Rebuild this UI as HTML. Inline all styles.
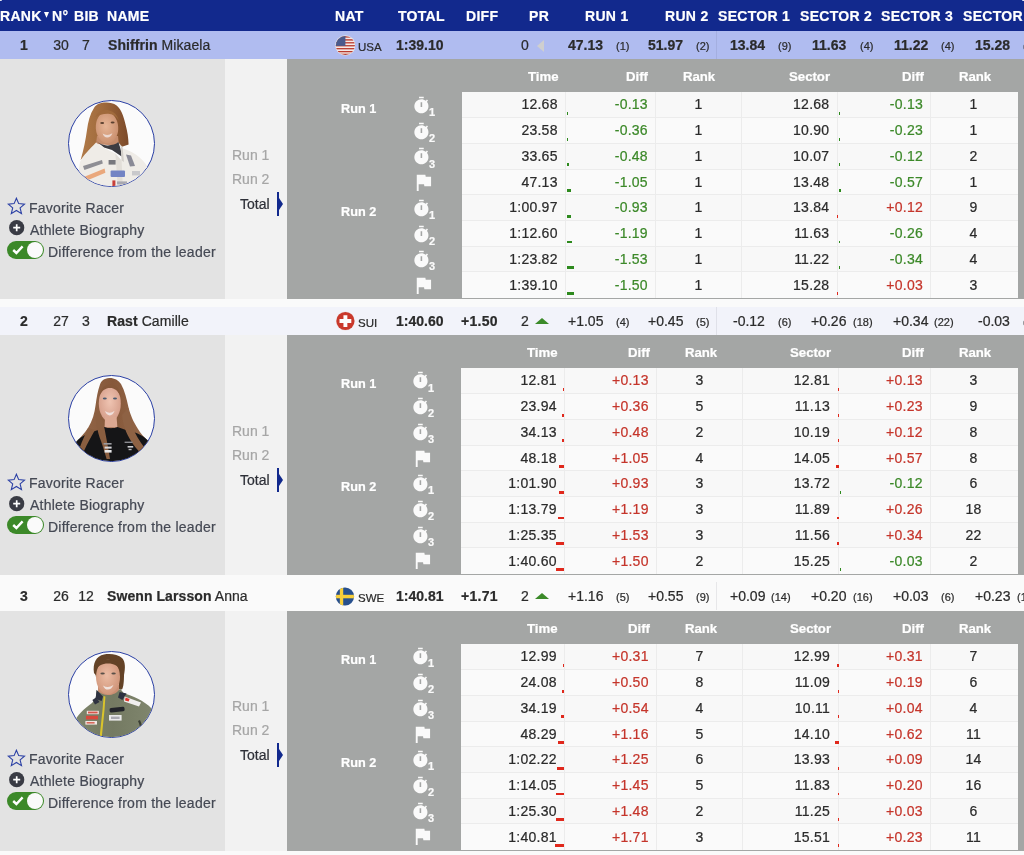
<!DOCTYPE html>
<html lang="en"><head><meta charset="utf-8"><title>Results</title>
<style>
html,body{margin:0;padding:0}
body{-webkit-text-stroke:.22px;background:#fafafa;font-family:"Liberation Sans",Arial,Helvetica,sans-serif;font-size:14px;color:#2b2b2b;overflow:hidden}
#page{position:relative;width:1024px;height:855px;overflow:hidden;background:#fafafa}
.t{position:absolute;white-space:nowrap;line-height:16px;font-size:14px;will-change:transform}
.b,b{font-weight:bold}
.c{text-align:center}
.r{text-align:right}
.hdr{position:absolute;left:0;top:0;width:1024px;height:30.5px;background:#12298d;color:#fff}
.hdr .h{top:7.5px;font-weight:bold;color:#fff;letter-spacing:.3px}
.sortarrow{position:absolute;left:44.3px;top:11.6px;width:5px;height:6px}
.sortarrow svg{display:block}
.racer{position:absolute;left:0;width:1024px;height:28px}
.rbg{position:absolute;left:0;width:1024px;height:28.1px;background:#f2f3fa}
.racer.hl .rbg{background:#b0bcf0}
.racer.odd .rbg{background:#fafafa}
.racer .t{top:6px}
.racer .nm{letter-spacing:.08px}
.racer .df{letter-spacing:.3px}
.racer .sm{font-size:11px;top:7px}
.racer .nat{font-size:11.5px;top:8px}
.flag{position:absolute;left:334.6px;top:3.8px;width:20.8px;height:20.8px}
.flag svg{width:20.8px;height:20.8px}
.flag svg{display:block}
.tri{position:absolute;width:0;height:0}
.tri.left{left:537px;top:9px;border-top:6.25px solid transparent;border-bottom:6.25px solid transparent;border-right:7px solid #cfcfcf}
.tri.up{left:534.5px;top:10.5px;border-left:7px solid transparent;border-right:7px solid transparent;border-bottom:6.5px solid #3b8a29}
.vsep{position:absolute;left:716px;top:0;width:1px;height:28px;background:rgba(40,40,70,.09)}
.detail{position:absolute;left:0;width:1024px;height:240px}
.dc{position:absolute;left:0;width:1024px;height:240px}
.rc{position:absolute;left:0;width:1024px;height:28px}
.lp{position:absolute;left:0;top:0;width:225px;height:240px}
.bgl{position:absolute;left:0;top:-.4px;width:225px;height:240.6px;background:#e3e3e3}
.mp{position:absolute;left:225px;top:0;width:62px;height:240px}
.bgm{position:absolute;left:225px;top:-.4px;width:62px;height:240.6px;background:#f2f2f2}
.rp{position:absolute;left:287px;top:0;width:737px;height:240px}
.bgr{position:absolute;left:287px;top:-.4px;width:737px;height:240.6px;background:#a4a6a5}
.photo{position:absolute;left:68px;top:41px;width:87px;height:87px}
.photo svg{display:block}
.lt{color:#454954;letter-spacing:.24px}
.ic{position:absolute;display:block}
.ic svg{display:block}
.star{left:7px;top:138.4px}
.plus{left:8.8px;top:161.3px}
.toggle{position:absolute;left:7.2px;top:181.7px;width:36.8px;height:18.4px;border-radius:9.2px;background:#3c8929}
.toggle svg{position:absolute;left:4.6px;top:4px}
.toggle i{position:absolute;right:1.2px;top:1.2px;width:16px;height:16px;border-radius:8px;background:#fafafa}
.mt{right:17.4px;color:#2e3038}
.mt.g{color:#a6a6a6}
.sel{position:absolute;left:52.4px;top:132.8px;width:2.1px;height:24.2px;background:#12298d}
.sel:after{content:'';position:absolute;left:2px;top:6.1px;border-top:6px solid transparent;border-bottom:6px solid transparent;border-left:4.4px solid #12298d}
.th{color:#fff;font-weight:bold;font-size:13.2px;top:10px}
.sw{left:124.55px}
.fl{left:125px}
.sub{left:141.8px;color:#fafafa;font-weight:bold;font-size:11px;line-height:10px}
.rl{font-size:12.7px}
table.tb{will-change:transform;position:absolute;left:175px;top:33.2px;border-collapse:collapse;table-layout:fixed;width:555.5px}
.tb td{height:25.7px;padding:0 8px .7px 0;border:1px solid #ececec;background:#f8f8f8;font-size:14px;text-align:right;position:relative;line-height:16px;letter-spacing:.25px;box-sizing:border-box}
.tb tr:nth-child(even) td{background:#fafafa}
.tb tr td:first-child{border-left:none}
.tb tr:first-child td{border-top:none}
.tb tr:last-child td{border-bottom:none}
.tb tr td:last-child{border-right:none}
.tb td.c3,.tb td.c6{text-align:center;padding:0 0 .7px 0}
.tb td.c2,.tb td.c5{padding-right:7.2px}
.tb td.c6{padding-right:1.6px}
.tb .gr{color:#3c8929}
.tb .rd{color:#c5352b}
.bar{position:absolute;bottom:2.2px;height:2.9px;display:block}
.gr .bar{background:#2e8a1e}
.rd .bar{background:#e0281c}

.cr{position:absolute;right:0;top:0;width:2px;height:1px;background:#dfe3f3;border-radius:0 0 0 2px}
.cl{position:absolute;left:0;top:0;width:2px;height:1px;background:#dfe3f3;border-radius:0 0 2px 0}

</style></head><body>
<div id="page">
<div class="hdr"><span class="t h" style="left:0px">RANK</span><span class="t h" style="left:52px">N°</span><span class="t h" style="left:74px">BIB</span><span class="t h" style="left:107px">NAME</span><span class="t h" style="left:335px">NAT</span><span class="t h" style="left:398px">TOTAL</span><span class="t h" style="left:466px">DIFF</span><span class="t h" style="left:529px">PR</span><span class="t h" style="left:585px">RUN 1</span><span class="t h" style="left:665px">RUN 2</span><span class="t h" style="left:718px">SECTOR 1</span><span class="t h" style="left:800px">SECTOR 2</span><span class="t h" style="left:881px">SECTOR 3</span><span class="t h" style="left:963px">SECTOR 4</span><span class="sortarrow"><svg width="5" height="6" viewBox="0 0 5 6"><path d="M0 0 H5 L2.7 5.6 H2.3 Z" fill="#fff"/></svg></span></div>
<div class="racer hl" style="top:31px"><div class="rbg" style="top:-0.5px"></div><div class="rc"><span class="t b c" style="left:4px;width:40px">1</span><span class="t c" style="left:46px;width:30px">30</span><span class="t c" style="left:72px;width:28px">7</span><span class="t nm" style="left:107.5px"><b>Shiffrin</b> Mikaela</span><span class="flag"><svg width="20.8" height="20.8" viewBox="0 0 20.8 20.8"><defs><clipPath id="fc1"><circle cx="10.35" cy="10.45" r="9.5"/></clipPath></defs><circle cx="10.35" cy="10.45" r="10.1" fill="#e6e4e6"/><g clip-path="url(#fc1)"><rect width="20.8" height="20.8" fill="#f4e9e6"/><g fill="#b83a2e"><rect y="1.2" width="20.8" height="1.4"/><rect y="4.2" width="20.8" height="1.4"/><rect y="7.15" width="20.8" height="1.3"/><rect y="10.1" width="20.8" height="1.3"/><rect y="13.05" width="20.8" height="1.3"/><rect y="16" width="20.8" height="1.3"/><rect y="18.7" width="20.8" height="1.4"/></g><rect width="10.4" height="10.9" fill="#4a5a8c"/></g></svg></span><span class="t nat" style="left:358px">USA</span><span class="t b" style="left:396px">1:39.10</span><span class="t r" style="right:495px">0</span><span class="tri left"></span><span class="t r b" style="right:421px">47.13</span><span class="t r sm" style="right:395px">(1)</span><span class="t r b" style="right:341px">51.97</span><span class="t r sm" style="right:315px">(2)</span><span class="t r b" style="right:259px">13.84</span><span class="t r sm" style="right:233px">(9)</span><span class="t r b" style="right:178px">11.63</span><span class="t r sm" style="right:151px">(4)</span><span class="t r b" style="right:96px">11.22</span><span class="t r sm" style="right:70px">(4)</span><span class="t r b" style="right:14px">15.28</span><span class="t r sm" style="right:-12px">(3)</span></div><span class="vsep"></span></div>
<div class="detail" style="top:59px"><div class="bgl" style="top:-0.4px;height:240.7px"></div><div class="bgm" style="top:-0.4px;height:240.7px"></div><div class="bgr" style="top:-0.4px;height:240.7px"></div><div class="dc"><div class="lp"><div class="photo" style="top:41.0px"><svg width="87" height="87" viewBox="0 0 87 87"><defs><clipPath id="pc1"><circle cx="43.5" cy="43.5" r="42.7"/></clipPath><linearGradient id="h1" x1="0" y1="0" x2="1" y2="0"><stop offset="0" stop-color="#b07a48"/><stop offset=".45" stop-color="#a06a3c"/><stop offset="1" stop-color="#7c4a2a"/></linearGradient><radialGradient id="f1" cx=".45" cy=".45" r=".6"><stop offset="0" stop-color="#e6b596"/><stop offset="1" stop-color="#c98f6e"/></radialGradient></defs><circle cx="43.5" cy="43.5" r="43" fill="#fbfbfb" stroke="#2b40a5" stroke-width="1"/><g clip-path="url(#pc1)"><path d="M38.6 2.6 C33 2.4 28.5 4 26 8 C22 14 20 22 19 30 C17.6 40 15.6 50 12.6 60 L24 48 L30 42 L50 42 L54 46.8 L60.6 44.4 C60.4 38 59.6 32 57.4 24 C55.6 16 53 9 48.6 5.6 C45.6 3.4 42 2.6 38.6 2.6 Z" fill="url(#h1)"/><path d="M29 36 L50 36 L51 46 L28 44 Z" fill="#c48c6c"/><ellipse cx="39" cy="27.6" rx="11.2" ry="15.6" fill="url(#f1)" transform="rotate(-4 39 27.6)"/><path d="M27.4 17 C30 11 36 9.4 41 10.4 C46 11.4 49.4 15 50.6 20 C48 15.6 44 13.6 39.6 13.8 C34.6 14 30.4 15 27.4 17 Z" fill="#a06a3c"/><path d="M34.6 33.6 Q39.4 36.6 44.4 33.2 Q42.6 37.6 39.2 37.6 Q36 37.6 34.6 33.6 Z" fill="#ecd8d0"/><ellipse cx="34.2" cy="23" rx="2" ry="1" fill="#5a4030"/><ellipse cx="44.6" cy="22.4" rx="2" ry="1" fill="#5a4030"/><path d="M27.6 40.6 C32 44.6 36 45.6 40 45.4 C44 45.2 48 44.4 50.4 42 L52 47 L54.4 57 L44 50 L36 47.6 Z" fill="#3c3c42"/><path d="M12 62 C15 55 22 49 28 42.4 C33 46.6 40 50 47.4 53.6 L53.6 60.6 L53 47.6 L59 50 C67 53 75 59 79 66 L80 90 L8 90 Z" fill="#efece7"/><path d="M53.6 60.6 L53 47.6 L50.8 43.4 L54.6 47 L56 62 Z" fill="#d4d0ca"/><path d="M47.4 53.6 L53.6 60.6 L55 90 L50 90 Z" fill="#e2ded8"/><rect x="42.6" y="70.4" width="14.4" height="6.6" rx="1" fill="#7384c4"/><path d="M17 76.4 L36.6 68.6 L37.4 72.8 L19 80.4 Z" fill="#eaa87c"/><path d="M15 66 L34 60 L34.8 63.6 L16.4 70 Z" fill="#8e8e94"/><rect x="40.6" y="60" width="7" height="4.6" fill="#77777d"/><path d="M58 54.4 L63 55.6 L67 66 L62 66.4 Z" fill="#8a8a96"/><rect x="64" y="71" width="8" height="4.4" fill="#c9c9cc"/><rect x="44.4" y="80.4" width="3" height="6" fill="#c8403a"/><rect x="49" y="81.4" width="10" height="3" fill="#a8a8b0"/></g></svg></div><span class="ic star" style="top:138.4px"><svg width="19" height="18" viewBox="0 0 19 18"><path d="M9.4 1.2 L11.7 6.6 L17.5 7.1 L13.1 10.9 L14.5 16.6 L9.4 13.5 L4.3 16.6 L5.7 10.9 L1.3 7.1 L7.1 6.6 Z" fill="none" stroke="#2b40a5" stroke-width="1.1" stroke-linejoin="miter"/></svg></span><span class="t lt" style="left:29.3px;top:141px">Favorite Racer</span><span class="ic plus" style="top:161.3px"><svg width="16" height="16" viewBox="0 0 16 16"><circle cx="7.7" cy="7.7" r="7.6" fill="#393b44"/><path d="M7.7 4.2 V11.2 M4.2 7.7 H11.2" stroke="#fff" stroke-width="1.7"/></svg></span><span class="t lt" style="left:30px;top:163px">Athlete Biography</span><span class="toggle" style="top:181.7px"><svg width="12" height="10" viewBox="0 0 12 10"><path d="M1.2 5 L4.4 8 L10.6 1.4" fill="none" stroke="#fff" stroke-width="2.4"/></svg><i></i></span><span class="t lt" style="left:47.8px;top:185px">Difference from the leader</span></div><div class="mp"><span class="t mt g" style="top:88px">Run 1</span><span class="t mt g" style="top:112px">Run 2</span><span class="t mt" style="top:137px">Total</span><span class="sel" style="top:132.8px"></span></div><div class="rp"><span class="t th r" style="right:465.5px;top:10px">Time</span><span class="t th r" style="right:376px;top:10px">Diff</span><span class="t th r" style="right:193.5px;top:10px">Sector</span><span class="t th r" style="right:100.5px;top:10px">Diff</span><span class="t th c" style="left:382px;width:60px;top:10px">Rank</span><span class="t th c" style="left:657.5px;width:60px;top:10px">Rank</span><span class="t th rl" style="left:54px;top:42px">Run 1</span><span class="t th rl" style="left:54px;top:145px">Run 2</span><span class="ic sw" style="top:37.0px;left:124.55px"><svg width="18.8" height="18.8" viewBox="0 0 24 24"><path fill="#fafafa" d="M15 1H9v2h6V1zm4.03 6.39l1.42-1.42c-.43-.51-.9-.99-1.41-1.41l-1.42 1.42C16.07 4.74 14.12 4 12 4c-4.97 0-9 4.03-9 9s4.02 9 9 9 9-4.03 9-9c0-2.12-.74-4.07-1.97-5.61zM13 14h-2V8h2v6z"/></svg></span><span class="t sub" style="top:48.1px;left:141.8px">1</span><span class="ic sw" style="top:62.7px;left:124.55px"><svg width="18.8" height="18.8" viewBox="0 0 24 24"><path fill="#fafafa" d="M15 1H9v2h6V1zm4.03 6.39l1.42-1.42c-.43-.51-.9-.99-1.41-1.41l-1.42 1.42C16.07 4.74 14.12 4 12 4c-4.97 0-9 4.03-9 9s4.02 9 9 9 9-4.03 9-9c0-2.12-.74-4.07-1.97-5.61zM13 14h-2V8h2v6z"/></svg></span><span class="t sub" style="top:73.8px;left:141.8px">2</span><span class="ic sw" style="top:88.4px;left:124.55px"><svg width="18.8" height="18.8" viewBox="0 0 24 24"><path fill="#fafafa" d="M15 1H9v2h6V1zm4.03 6.39l1.42-1.42c-.43-.51-.9-.99-1.41-1.41l-1.42 1.42C16.07 4.74 14.12 4 12 4c-4.97 0-9 4.03-9 9s4.02 9 9 9 9-4.03 9-9c0-2.12-.74-4.07-1.97-5.61zM13 14h-2V8h2v6z"/></svg></span><span class="t sub" style="top:99.5px;left:141.8px">3</span><span class="ic fl" style="top:112.2px;left:125px"><svg width="22.9" height="22.9" viewBox="0 0 24 24"><path fill="#fafafa" d="M14.4 6L14 4H5v17h2v-7h5.6l.4 2h7V6z"/></svg></span><span class="ic sw" style="top:139.8px;left:124.55px"><svg width="18.8" height="18.8" viewBox="0 0 24 24"><path fill="#fafafa" d="M15 1H9v2h6V1zm4.03 6.39l1.42-1.42c-.43-.51-.9-.99-1.41-1.41l-1.42 1.42C16.07 4.74 14.12 4 12 4c-4.97 0-9 4.03-9 9s4.02 9 9 9 9-4.03 9-9c0-2.12-.74-4.07-1.97-5.61zM13 14h-2V8h2v6z"/></svg></span><span class="t sub" style="top:150.9px;left:141.8px">1</span><span class="ic sw" style="top:165.5px;left:124.55px"><svg width="18.8" height="18.8" viewBox="0 0 24 24"><path fill="#fafafa" d="M15 1H9v2h6V1zm4.03 6.39l1.42-1.42c-.43-.51-.9-.99-1.41-1.41l-1.42 1.42C16.07 4.74 14.12 4 12 4c-4.97 0-9 4.03-9 9s4.02 9 9 9 9-4.03 9-9c0-2.12-.74-4.07-1.97-5.61zM13 14h-2V8h2v6z"/></svg></span><span class="t sub" style="top:176.6px;left:141.8px">2</span><span class="ic sw" style="top:191.2px;left:124.55px"><svg width="18.8" height="18.8" viewBox="0 0 24 24"><path fill="#fafafa" d="M15 1H9v2h6V1zm4.03 6.39l1.42-1.42c-.43-.51-.9-.99-1.41-1.41l-1.42 1.42C16.07 4.74 14.12 4 12 4c-4.97 0-9 4.03-9 9s4.02 9 9 9 9-4.03 9-9c0-2.12-.74-4.07-1.97-5.61zM13 14h-2V8h2v6z"/></svg></span><span class="t sub" style="top:202.3px;left:141.8px">3</span><span class="ic fl" style="top:215.0px;left:125px"><svg width="22.9" height="22.9" viewBox="0 0 24 24"><path fill="#fafafa" d="M14.4 6L14 4H5v17h2v-7h5.6l.4 2h7V6z"/></svg></span><table class="tb" style="top:33.2px;left:175px;width:555.7px"><colgroup><col style="width:103.8px"><col style="width:89.8px"><col style="width:85.7px"><col style="width:96.6px"><col style="width:92.8px"><col style="width:87.0px"></colgroup><tr><td class="c1" style="padding-right:7.6px">12.68</td><td class="c2 gr"><i class="bar" style="left:0.5px;width:0.8px"></i>-0.13</td><td class="c3">1</td><td class="c4">12.68</td><td class="c5 gr"><i class="bar" style="left:0.5px;width:0.8px"></i>-0.13</td><td class="c6">1</td></tr><tr><td class="c1" style="padding-right:7.6px">23.58</td><td class="c2 gr"><i class="bar" style="left:0.5px;width:1.5px"></i>-0.36</td><td class="c3">1</td><td class="c4">10.90</td><td class="c5 gr"><i class="bar" style="left:0.5px;width:1.0px"></i>-0.23</td><td class="c6">1</td></tr><tr><td class="c1" style="padding-right:7.6px">33.65</td><td class="c2 gr"><i class="bar" style="left:0.5px;width:2.0px"></i>-0.48</td><td class="c3">1</td><td class="c4">10.07</td><td class="c5 gr"><i class="bar" style="left:0.5px;width:0.8px"></i>-0.12</td><td class="c6">2</td></tr><tr><td class="c1" style="padding-right:7.6px">47.13</td><td class="c2 gr"><i class="bar" style="left:0.5px;width:4.5px"></i>-1.05</td><td class="c3">1</td><td class="c4">13.48</td><td class="c5 gr"><i class="bar" style="left:0.5px;width:2.5px"></i>-0.57</td><td class="c6">1</td></tr><tr><td class="c1" style="padding-right:7.6px">1:00.97</td><td class="c2 gr"><i class="bar" style="left:0.5px;width:4.0px"></i>-0.93</td><td class="c3">1</td><td class="c4">13.84</td><td class="c5 rd"><i class="bar" style="left:-1.3px;width:0.8px"></i>+0.12</td><td class="c6">9</td></tr><tr><td class="c1" style="padding-right:7.6px">1:12.60</td><td class="c2 gr"><i class="bar" style="left:0.5px;width:5.5px"></i>-1.19</td><td class="c3">1</td><td class="c4">11.63</td><td class="c5 gr"><i class="bar" style="left:0.5px;width:1.0px"></i>-0.26</td><td class="c6">4</td></tr><tr><td class="c1" style="padding-right:7.6px">1:23.82</td><td class="c2 gr"><i class="bar" style="left:0.5px;width:7.0px"></i>-1.53</td><td class="c3">1</td><td class="c4">11.22</td><td class="c5 gr"><i class="bar" style="left:0.5px;width:1.5px"></i>-0.34</td><td class="c6">4</td></tr><tr><td class="c1" style="padding-right:7.6px">1:39.10</td><td class="c2 gr"><i class="bar" style="left:0.5px;width:7.0px"></i>-1.50</td><td class="c3">1</td><td class="c4">15.28</td><td class="c5 rd"><i class="bar" style="left:-1.3px;width:0.8px"></i>+0.03</td><td class="c6">3</td></tr></table></div></div></div>
<div class="racer" style="top:307px"><div class="rbg" style="top:-0.4px"></div><div class="rc"><span class="t b c" style="left:4px;width:40px">2</span><span class="t c" style="left:46px;width:30px">27</span><span class="t c" style="left:72px;width:28px">3</span><span class="t nm" style="left:106.8px"><b>Rast</b> Camille</span><span class="flag"><svg width="20.8" height="20.8" viewBox="0 0 20.8 20.8"><circle cx="10.4" cy="10" r="9.45" fill="#ecdcdc"/><circle cx="10.4" cy="10" r="9.1" fill="#c9382b"/><path d="M8.45 4.2 H12.35 V8.05 H16.3 V11.95 H12.35 V16 H8.45 V11.95 H4.5 V8.05 H8.45 Z" fill="#fdfdfd"/></svg></span><span class="t nat" style="left:358px">SUI</span><span class="t b" style="left:396px">1:40.60</span><span class="t b df" style="left:461.3px">+1.50</span><span class="t r" style="right:495px">2</span><span class="tri up"></span><span class="t r" style="right:421px">+1.05</span><span class="t r sm" style="right:395px">(4)</span><span class="t r" style="right:341px">+0.45</span><span class="t r sm" style="right:315px">(5)</span><span class="t r" style="right:259px">-0.12</span><span class="t r sm" style="right:233px">(6)</span><span class="t r" style="right:178px">+0.26</span><span class="t r sm" style="right:151px">(18)</span><span class="t r" style="right:96px">+0.34</span><span class="t r sm" style="right:70px">(22)</span><span class="t r" style="right:14px">-0.03</span><span class="t r sm" style="right:-12px">(2)</span></div><span class="vsep"></span></div>
<div class="detail" style="top:334px"><div class="bgl" style="top:0.7px;height:240.4px"></div><div class="bgm" style="top:0.7px;height:240.4px"></div><div class="bgr" style="top:0.7px;height:240.4px"></div><div class="dc"><div class="lp"><div class="photo" style="top:41.4px"><svg width="87" height="87" viewBox="0 0 87 87"><defs><clipPath id="pc2"><circle cx="43.5" cy="43.5" r="42.7"/></clipPath><linearGradient id="h2" x1="0" y1="0" x2="1" y2="0"><stop offset="0" stop-color="#94684a"/><stop offset=".5" stop-color="#86583a"/><stop offset="1" stop-color="#96694a"/></linearGradient><radialGradient id="f2" cx=".5" cy=".45" r=".6"><stop offset="0" stop-color="#efc4b2"/><stop offset="1" stop-color="#d49c88"/></radialGradient></defs><circle cx="43.5" cy="43.5" r="43" fill="#fbfbfb" stroke="#2b40a5" stroke-width="1"/><g clip-path="url(#pc2)"><path d="M41.2 3 C36 3.4 33.2 6 32 9.6 C29.6 16 28.6 23 27.6 30 C26.6 38 24.4 46 20 53 C16 59 11.4 63 8.6 67.4 L20 80 L70 78 L80 66 C76 62 72.6 58.6 70 54 C65 46 62.4 40 60.4 32 C58.6 24 57 16 53 9 C50.4 5 46 2.8 41.2 3 Z" fill="url(#h2)"/><ellipse cx="41.8" cy="28.4" rx="11" ry="18" fill="url(#f2)"/><path d="M31 22 C32 14 36 9.6 42 9.4 C48 9.4 52 14 53 22 C50 15.6 46.4 13 42 13 C37.4 13 33.6 15.6 31 22 Z" fill="#86583a"/><path d="M37 36 Q41.8 39.4 46.6 35.8 Q44.8 40.4 41.8 40.4 Q38.6 40.4 37 36 Z" fill="#f0e0dc"/><ellipse cx="36.8" cy="23.6" rx="2" ry="1" fill="#4a5a70"/><ellipse cx="47" cy="23.4" rx="2" ry="1" fill="#4a5a70"/><path d="M37 42 L48.6 42 L49.4 52.4 L36.6 52.4 Z" fill="#dca892"/><path d="M6 70 C10 62 20 58 30 55 L36.6 52 C40 53.6 46 53.6 49.4 52 L58 55 C68 57.4 76 60 82 68 L82 90 L4 90 Z" fill="#151517"/><path d="M27.6 34 C27 44 29 56 33 66 C35 72 37 78 38.6 84 L42 84 C40.6 74 38.4 64 36.6 54 C35.4 48 33 42 30.6 38 Z" fill="#8a5e40"/><path d="M54 40 C55 50 58 58 63 66 C66 71 69.6 75 72.6 78 L76 72 C71.6 66 67.6 60 64.6 52 C62.6 46 61.6 40 60.4 33 Z" fill="#8e6244"/><path d="M20 53 C17 60 14 66 12 72 L16 76 C19 69 23 62 27 55 Z" fill="#8a5e40"/><rect x="35.6" y="68" width="8" height="1.6" fill="#9a9aa0"/><rect x="36.6" y="71.6" width="7" height="2" fill="#d8d8dc"/><rect x="36.6" y="75" width="7" height="2.6" fill="#e8e8ea"/><rect x="56.6" y="66.6" width="8" height="1.4" fill="#8a8a90"/><rect x="59.6" y="71" width="5.6" height="1.6" fill="#d0d0d4"/><rect x="60.6" y="73.8" width="3" height="1.4" fill="#b8b8bc"/></g></svg></div><span class="ic star" style="top:138.8px"><svg width="19" height="18" viewBox="0 0 19 18"><path d="M9.4 1.2 L11.7 6.6 L17.5 7.1 L13.1 10.9 L14.5 16.6 L9.4 13.5 L4.3 16.6 L5.7 10.9 L1.3 7.1 L7.1 6.6 Z" fill="none" stroke="#2b40a5" stroke-width="1.1" stroke-linejoin="miter"/></svg></span><span class="t lt" style="left:29.3px;top:141px">Favorite Racer</span><span class="ic plus" style="top:161.7px"><svg width="16" height="16" viewBox="0 0 16 16"><circle cx="7.7" cy="7.7" r="7.6" fill="#393b44"/><path d="M7.7 4.2 V11.2 M4.2 7.7 H11.2" stroke="#fff" stroke-width="1.7"/></svg></span><span class="t lt" style="left:30px;top:163px">Athlete Biography</span><span class="toggle" style="top:182.1px"><svg width="12" height="10" viewBox="0 0 12 10"><path d="M1.2 5 L4.4 8 L10.6 1.4" fill="none" stroke="#fff" stroke-width="2.4"/></svg><i></i></span><span class="t lt" style="left:47.8px;top:185px">Difference from the leader</span></div><div class="mp"><span class="t mt g" style="top:89px">Run 1</span><span class="t mt g" style="top:113px">Run 2</span><span class="t mt" style="top:138px">Total</span><span class="sel" style="top:133.8px"></span></div><div class="rp"><span class="t th r" style="right:466px;top:11px">Time</span><span class="t th r" style="right:374.5px;top:11px">Diff</span><span class="t th r" style="right:192.5px;top:11px">Sector</span><span class="t th r" style="right:100.5px;top:11px">Diff</span><span class="t th c" style="left:383.5px;width:60px;top:11px">Rank</span><span class="t th c" style="left:657.5px;width:60px;top:11px">Rank</span><span class="t th rl" style="left:54px;top:42px">Run 1</span><span class="t th rl" style="left:54px;top:145px">Run 2</span><span class="ic sw" style="top:37.4px;left:123.65px"><svg width="18.8" height="18.8" viewBox="0 0 24 24"><path fill="#fafafa" d="M15 1H9v2h6V1zm4.03 6.39l1.42-1.42c-.43-.51-.9-.99-1.41-1.41l-1.42 1.42C16.07 4.74 14.12 4 12 4c-4.97 0-9 4.03-9 9s4.02 9 9 9 9-4.03 9-9c0-2.12-.74-4.07-1.97-5.61zM13 14h-2V8h2v6z"/></svg></span><span class="t sub" style="top:48.5px;left:140.9px">1</span><span class="ic sw" style="top:63.1px;left:123.65px"><svg width="18.8" height="18.8" viewBox="0 0 24 24"><path fill="#fafafa" d="M15 1H9v2h6V1zm4.03 6.39l1.42-1.42c-.43-.51-.9-.99-1.41-1.41l-1.42 1.42C16.07 4.74 14.12 4 12 4c-4.97 0-9 4.03-9 9s4.02 9 9 9 9-4.03 9-9c0-2.12-.74-4.07-1.97-5.61zM13 14h-2V8h2v6z"/></svg></span><span class="t sub" style="top:74.2px;left:140.9px">2</span><span class="ic sw" style="top:88.8px;left:123.65px"><svg width="18.8" height="18.8" viewBox="0 0 24 24"><path fill="#fafafa" d="M15 1H9v2h6V1zm4.03 6.39l1.42-1.42c-.43-.51-.9-.99-1.41-1.41l-1.42 1.42C16.07 4.74 14.12 4 12 4c-4.97 0-9 4.03-9 9s4.02 9 9 9 9-4.03 9-9c0-2.12-.74-4.07-1.97-5.61zM13 14h-2V8h2v6z"/></svg></span><span class="t sub" style="top:99.9px;left:140.9px">3</span><span class="ic fl" style="top:112.6px;left:124.1px"><svg width="22.9" height="22.9" viewBox="0 0 24 24"><path fill="#fafafa" d="M14.4 6L14 4H5v17h2v-7h5.6l.4 2h7V6z"/></svg></span><span class="ic sw" style="top:140.2px;left:123.65px"><svg width="18.8" height="18.8" viewBox="0 0 24 24"><path fill="#fafafa" d="M15 1H9v2h6V1zm4.03 6.39l1.42-1.42c-.43-.51-.9-.99-1.41-1.41l-1.42 1.42C16.07 4.74 14.12 4 12 4c-4.97 0-9 4.03-9 9s4.02 9 9 9 9-4.03 9-9c0-2.12-.74-4.07-1.97-5.61zM13 14h-2V8h2v6z"/></svg></span><span class="t sub" style="top:151.3px;left:140.9px">1</span><span class="ic sw" style="top:165.9px;left:123.65px"><svg width="18.8" height="18.8" viewBox="0 0 24 24"><path fill="#fafafa" d="M15 1H9v2h6V1zm4.03 6.39l1.42-1.42c-.43-.51-.9-.99-1.41-1.41l-1.42 1.42C16.07 4.74 14.12 4 12 4c-4.97 0-9 4.03-9 9s4.02 9 9 9 9-4.03 9-9c0-2.12-.74-4.07-1.97-5.61zM13 14h-2V8h2v6z"/></svg></span><span class="t sub" style="top:177.0px;left:140.9px">2</span><span class="ic sw" style="top:191.6px;left:123.65px"><svg width="18.8" height="18.8" viewBox="0 0 24 24"><path fill="#fafafa" d="M15 1H9v2h6V1zm4.03 6.39l1.42-1.42c-.43-.51-.9-.99-1.41-1.41l-1.42 1.42C16.07 4.74 14.12 4 12 4c-4.97 0-9 4.03-9 9s4.02 9 9 9 9-4.03 9-9c0-2.12-.74-4.07-1.97-5.61zM13 14h-2V8h2v6z"/></svg></span><span class="t sub" style="top:202.7px;left:140.9px">3</span><span class="ic fl" style="top:215.4px;left:124.1px"><svg width="22.9" height="22.9" viewBox="0 0 24 24"><path fill="#fafafa" d="M14.4 6L14 4H5v17h2v-7h5.6l.4 2h7V6z"/></svg></span><table class="tb" style="top:33.6px;left:174.2px;width:556.5px"><colgroup><col style="width:103.1px"><col style="width:92.3px"><col style="width:86.4px"><col style="width:95.8px"><col style="width:91.9px"><col style="width:87.0px"></colgroup><tr><td class="c1" style="padding-right:6.8px">12.81</td><td class="c2 rd"><i class="bar" style="left:-1.3px;width:0.8px"></i>+0.13</td><td class="c3">3</td><td class="c4">12.81</td><td class="c5 rd"><i class="bar" style="left:-1.3px;width:0.8px"></i>+0.13</td><td class="c6">3</td></tr><tr><td class="c1" style="padding-right:6.8px">23.94</td><td class="c2 rd"><i class="bar" style="left:-2.5px;width:2.0px"></i>+0.36</td><td class="c3">5</td><td class="c4">11.13</td><td class="c5 rd"><i class="bar" style="left:-1.5px;width:1.0px"></i>+0.23</td><td class="c6">9</td></tr><tr><td class="c1" style="padding-right:6.8px">34.13</td><td class="c2 rd"><i class="bar" style="left:-3.0px;width:2.5px"></i>+0.48</td><td class="c3">2</td><td class="c4">10.19</td><td class="c5 rd"><i class="bar" style="left:-1.3px;width:0.8px"></i>+0.12</td><td class="c6">8</td></tr><tr><td class="c1" style="padding-right:6.8px">48.18</td><td class="c2 rd"><i class="bar" style="left:-6.0px;width:5.5px"></i>+1.05</td><td class="c3">4</td><td class="c4">14.05</td><td class="c5 rd"><i class="bar" style="left:-3.5px;width:3.0px"></i>+0.57</td><td class="c6">8</td></tr><tr><td class="c1" style="padding-right:6.8px">1:01.90</td><td class="c2 rd"><i class="bar" style="left:-5.5px;width:5.0px"></i>+0.93</td><td class="c3">3</td><td class="c4">13.72</td><td class="c5 gr"><i class="bar" style="left:0.5px;width:0.8px"></i>-0.12</td><td class="c6">6</td></tr><tr><td class="c1" style="padding-right:6.8px">1:13.79</td><td class="c2 rd"><i class="bar" style="left:-7.0px;width:6.5px"></i>+1.19</td><td class="c3">3</td><td class="c4">11.89</td><td class="c5 rd"><i class="bar" style="left:-2.0px;width:1.5px"></i>+0.26</td><td class="c6">18</td></tr><tr><td class="c1" style="padding-right:6.8px">1:25.35</td><td class="c2 rd"><i class="bar" style="left:-9.0px;width:8.5px"></i>+1.53</td><td class="c3">3</td><td class="c4">11.56</td><td class="c5 rd"><i class="bar" style="left:-2.5px;width:2.0px"></i>+0.34</td><td class="c6">22</td></tr><tr><td class="c1" style="padding-right:6.8px">1:40.60</td><td class="c2 rd"><i class="bar" style="left:-8.5px;width:8.0px"></i>+1.50</td><td class="c3">2</td><td class="c4">15.25</td><td class="c5 gr"><i class="bar" style="left:0.5px;width:0.8px"></i>-0.03</td><td class="c6">2</td></tr></table></div></div></div>
<div class="racer odd" style="top:582px"><div class="rbg" style="top:0.7px"></div><div class="rc"><span class="t b c" style="left:4px;width:40px">3</span><span class="t c" style="left:46px;width:30px">26</span><span class="t c" style="left:72px;width:28px">12</span><span class="t nm" style="left:106.8px"><b>Swenn Larsson</b> Anna</span><span class="flag"><svg width="20.8" height="20.8" viewBox="0 0 20.8 20.8"><defs><clipPath id="fc3"><circle cx="9.95" cy="10.5" r="9.1"/></clipPath></defs><circle cx="9.95" cy="10.5" r="9.35" fill="#e6e8ee"/><g clip-path="url(#fc3)"><rect width="20.8" height="20.8" fill="#27508e"/><rect x="4.85" width="3.35" height="20.8" fill="#f8cf3a"/><rect y="8.8" width="20.8" height="3.5" fill="#f8cf3a"/></g></svg></span><span class="t nat" style="left:358px">SWE</span><span class="t b" style="left:396px">1:40.81</span><span class="t b df" style="left:461.3px">+1.71</span><span class="t r" style="right:495px">2</span><span class="tri up"></span><span class="t r" style="right:421px">+1.16</span><span class="t r sm" style="right:395px">(5)</span><span class="t r" style="right:341px">+0.55</span><span class="t r sm" style="right:315px">(9)</span><span class="t r" style="right:259px">+0.09</span><span class="t r sm" style="right:233px">(14)</span><span class="t r" style="right:178px">+0.20</span><span class="t r sm" style="right:151px">(16)</span><span class="t r" style="right:96px">+0.03</span><span class="t r sm" style="right:70px">(6)</span><span class="t r" style="right:14px">+0.23</span><span class="t r sm" style="right:-12px">(11)</span></div><span class="vsep"></span></div>
<div class="detail" style="top:610px"><div class="bgl" style="top:0.8px;height:240.0px"></div><div class="bgm" style="top:0.8px;height:240.0px"></div><div class="bgr" style="top:0.8px;height:240.0px"></div><div class="dc"><div class="lp"><div class="photo" style="top:41.3px"><svg width="87" height="87" viewBox="0 0 87 87"><defs><clipPath id="pc3"><circle cx="43.5" cy="43.5" r="42.7"/></clipPath><radialGradient id="f3" cx=".45" cy=".45" r=".6"><stop offset="0" stop-color="#ecbca4"/><stop offset="1" stop-color="#cf9478"/></radialGradient><linearGradient id="j3" x1="0" y1="0" x2="1" y2="0"><stop offset="0" stop-color="#7f866c"/><stop offset=".5" stop-color="#747a62"/><stop offset="1" stop-color="#80866e"/></linearGradient></defs><circle cx="43.5" cy="43.5" r="43" fill="#fbfbfb" stroke="#2b40a5" stroke-width="1"/><g clip-path="url(#pc3)"><path d="M26 22 C24.6 12 28 5 36 3.4 C42 2.4 50 3 54 7 C57.6 11 57.4 17 56 24 C56 30 55.6 36 54 38.6 L51 38 L50.6 26 L28 26 L27.6 24 Z" fill="#634226"/><path d="M30 34 L51 34 L51 47 L30 47 Z" fill="#c98e72"/><ellipse cx="40" cy="26" rx="12" ry="17.2" fill="url(#f3)"/><path d="M27 20 C28 12 33 8.6 40 8.6 C47 8.6 51.6 12 52.8 20 C50 14.6 46 12.4 40 12.4 C34 12.4 30 14.6 27 20 Z" fill="#634226"/><path d="M35 34.4 Q40 37.6 45.4 34 Q43.4 38.6 40 38.6 Q36.6 38.6 35 34.4 Z" fill="#f0e2dc"/><ellipse cx="34.6" cy="22.6" rx="2.2" ry="1" fill="#5a5048"/><ellipse cx="45.6" cy="22.4" rx="2.2" ry="1" fill="#5a5048"/><path d="M6 72 C9 64 16 58 24 52 L27.6 48 L28.6 39 C32 42.6 36 44 40 44 C45 44 49.6 41.6 52 37.4 L55.6 42 C64 45 76 49 84 58 L86 90 L4 90 Z" fill="url(#j3)"/><path d="M28.6 39 L27.6 48 L33.6 50 L35 45.6 Z" fill="#2e3240"/><path d="M24.4 49 L28 46.6 L31.6 51 L27 53.4 Z" fill="#2e3240"/><path d="M51.6 41 L58.6 42.4 L54.4 49 L50 46.6 Z" fill="#2e3240"/><path d="M35.6 45 L37.4 45.4 L36.6 58 L33.8 86 L31.6 86 L34.6 58 Z" fill="#d9c42c"/><path d="M56.6 45.6 L73 51.6 L71 55.6 L56 50.6 Z" fill="#f0eeee"/><path d="M57.6 46.6 L61.6 48 L60.6 50.6 L57 49.4 Z" fill="#e0342c"/><rect x="41.4" y="57.2" width="15" height="4.6" rx="1.6" fill="#22242a" transform="rotate(-6 41.4 57.2)"/><rect x="41" y="64" width="12.6" height="5.6" fill="#e9e9ea"/><rect x="43" y="65.6" width="8.6" height="2.4" fill="#a9a9b0"/><rect x="18.8" y="59.8" width="12" height="3.4" fill="#f0e4e2"/><rect x="20" y="60.6" width="9.6" height="1.8" fill="#d8554a"/><rect x="18" y="64.8" width="12" height="3.6" fill="#d8483c"/><rect x="17.4" y="70" width="11.6" height="3.6" fill="#f0e6e2"/><rect x="18.6" y="71" width="8" height="1.6" fill="#d86a5c"/><path d="M70 70 C72 74 72.6 78 72 84 L74 84 C75 78 74 73 72 69 Z" fill="#3a3e34"/></g></svg></div><span class="ic star" style="top:138.7px"><svg width="19" height="18" viewBox="0 0 19 18"><path d="M9.4 1.2 L11.7 6.6 L17.5 7.1 L13.1 10.9 L14.5 16.6 L9.4 13.5 L4.3 16.6 L5.7 10.9 L1.3 7.1 L7.1 6.6 Z" fill="none" stroke="#2b40a5" stroke-width="1.1" stroke-linejoin="miter"/></svg></span><span class="t lt" style="left:29.3px;top:141px">Favorite Racer</span><span class="ic plus" style="top:161.6px"><svg width="16" height="16" viewBox="0 0 16 16"><circle cx="7.7" cy="7.7" r="7.6" fill="#393b44"/><path d="M7.7 4.2 V11.2 M4.2 7.7 H11.2" stroke="#fff" stroke-width="1.7"/></svg></span><span class="t lt" style="left:30px;top:163px">Athlete Biography</span><span class="toggle" style="top:182.0px"><svg width="12" height="10" viewBox="0 0 12 10"><path d="M1.2 5 L4.4 8 L10.6 1.4" fill="none" stroke="#fff" stroke-width="2.4"/></svg><i></i></span><span class="t lt" style="left:47.8px;top:185px">Difference from the leader</span></div><div class="mp"><span class="t mt g" style="top:88px">Run 1</span><span class="t mt g" style="top:112px">Run 2</span><span class="t mt" style="top:137px">Total</span><span class="sel" style="top:133.2px"></span></div><div class="rp"><span class="t th r" style="right:466px;top:11px">Time</span><span class="t th r" style="right:374.5px;top:11px">Diff</span><span class="t th r" style="right:192.5px;top:11px">Sector</span><span class="t th r" style="right:100.5px;top:11px">Diff</span><span class="t th c" style="left:383.5px;width:60px;top:11px">Rank</span><span class="t th c" style="left:657.5px;width:60px;top:11px">Rank</span><span class="t th rl" style="left:54px;top:42px">Run 1</span><span class="t th rl" style="left:54px;top:145px">Run 2</span><span class="ic sw" style="top:37.3px;left:123.65px"><svg width="18.8" height="18.8" viewBox="0 0 24 24"><path fill="#fafafa" d="M15 1H9v2h6V1zm4.03 6.39l1.42-1.42c-.43-.51-.9-.99-1.41-1.41l-1.42 1.42C16.07 4.74 14.12 4 12 4c-4.97 0-9 4.03-9 9s4.02 9 9 9 9-4.03 9-9c0-2.12-.74-4.07-1.97-5.61zM13 14h-2V8h2v6z"/></svg></span><span class="t sub" style="top:48.4px;left:140.9px">1</span><span class="ic sw" style="top:63.0px;left:123.65px"><svg width="18.8" height="18.8" viewBox="0 0 24 24"><path fill="#fafafa" d="M15 1H9v2h6V1zm4.03 6.39l1.42-1.42c-.43-.51-.9-.99-1.41-1.41l-1.42 1.42C16.07 4.74 14.12 4 12 4c-4.97 0-9 4.03-9 9s4.02 9 9 9 9-4.03 9-9c0-2.12-.74-4.07-1.97-5.61zM13 14h-2V8h2v6z"/></svg></span><span class="t sub" style="top:74.1px;left:140.9px">2</span><span class="ic sw" style="top:88.7px;left:123.65px"><svg width="18.8" height="18.8" viewBox="0 0 24 24"><path fill="#fafafa" d="M15 1H9v2h6V1zm4.03 6.39l1.42-1.42c-.43-.51-.9-.99-1.41-1.41l-1.42 1.42C16.07 4.74 14.12 4 12 4c-4.97 0-9 4.03-9 9s4.02 9 9 9 9-4.03 9-9c0-2.12-.74-4.07-1.97-5.61zM13 14h-2V8h2v6z"/></svg></span><span class="t sub" style="top:99.8px;left:140.9px">3</span><span class="ic fl" style="top:112.5px;left:124.1px"><svg width="22.9" height="22.9" viewBox="0 0 24 24"><path fill="#fafafa" d="M14.4 6L14 4H5v17h2v-7h5.6l.4 2h7V6z"/></svg></span><span class="ic sw" style="top:140.1px;left:123.65px"><svg width="18.8" height="18.8" viewBox="0 0 24 24"><path fill="#fafafa" d="M15 1H9v2h6V1zm4.03 6.39l1.42-1.42c-.43-.51-.9-.99-1.41-1.41l-1.42 1.42C16.07 4.74 14.12 4 12 4c-4.97 0-9 4.03-9 9s4.02 9 9 9 9-4.03 9-9c0-2.12-.74-4.07-1.97-5.61zM13 14h-2V8h2v6z"/></svg></span><span class="t sub" style="top:151.2px;left:140.9px">1</span><span class="ic sw" style="top:165.8px;left:123.65px"><svg width="18.8" height="18.8" viewBox="0 0 24 24"><path fill="#fafafa" d="M15 1H9v2h6V1zm4.03 6.39l1.42-1.42c-.43-.51-.9-.99-1.41-1.41l-1.42 1.42C16.07 4.74 14.12 4 12 4c-4.97 0-9 4.03-9 9s4.02 9 9 9 9-4.03 9-9c0-2.12-.74-4.07-1.97-5.61zM13 14h-2V8h2v6z"/></svg></span><span class="t sub" style="top:176.9px;left:140.9px">2</span><span class="ic sw" style="top:191.5px;left:123.65px"><svg width="18.8" height="18.8" viewBox="0 0 24 24"><path fill="#fafafa" d="M15 1H9v2h6V1zm4.03 6.39l1.42-1.42c-.43-.51-.9-.99-1.41-1.41l-1.42 1.42C16.07 4.74 14.12 4 12 4c-4.97 0-9 4.03-9 9s4.02 9 9 9 9-4.03 9-9c0-2.12-.74-4.07-1.97-5.61zM13 14h-2V8h2v6z"/></svg></span><span class="t sub" style="top:202.6px;left:140.9px">3</span><span class="ic fl" style="top:215.3px;left:124.1px"><svg width="22.9" height="22.9" viewBox="0 0 24 24"><path fill="#fafafa" d="M14.4 6L14 4H5v17h2v-7h5.6l.4 2h7V6z"/></svg></span><table class="tb" style="top:33.5px;left:174.2px;width:556.5px"><colgroup><col style="width:103.1px"><col style="width:92.3px"><col style="width:86.4px"><col style="width:95.8px"><col style="width:91.9px"><col style="width:87.0px"></colgroup><tr><td class="c1" style="padding-right:6.8px">12.99</td><td class="c2 rd"><i class="bar" style="left:-2.0px;width:1.5px"></i>+0.31</td><td class="c3">7</td><td class="c4">12.99</td><td class="c5 rd"><i class="bar" style="left:-2.0px;width:1.5px"></i>+0.31</td><td class="c6">7</td></tr><tr><td class="c1" style="padding-right:6.8px">24.08</td><td class="c2 rd"><i class="bar" style="left:-3.0px;width:2.5px"></i>+0.50</td><td class="c3">8</td><td class="c4">11.09</td><td class="c5 rd"><i class="bar" style="left:-1.5px;width:1.0px"></i>+0.19</td><td class="c6">6</td></tr><tr><td class="c1" style="padding-right:6.8px">34.19</td><td class="c2 rd"><i class="bar" style="left:-3.5px;width:3.0px"></i>+0.54</td><td class="c3">4</td><td class="c4">10.11</td><td class="c5 rd"><i class="bar" style="left:-1.3px;width:0.8px"></i>+0.04</td><td class="c6">4</td></tr><tr><td class="c1" style="padding-right:6.8px">48.29</td><td class="c2 rd"><i class="bar" style="left:-7.0px;width:6.5px"></i>+1.16</td><td class="c3">5</td><td class="c4">14.10</td><td class="c5 rd"><i class="bar" style="left:-4.0px;width:3.5px"></i>+0.62</td><td class="c6">11</td></tr><tr><td class="c1" style="padding-right:6.8px">1:02.22</td><td class="c2 rd"><i class="bar" style="left:-7.5px;width:7.0px"></i>+1.25</td><td class="c3">6</td><td class="c4">13.93</td><td class="c5 rd"><i class="bar" style="left:-1.3px;width:0.8px"></i>+0.09</td><td class="c6">14</td></tr><tr><td class="c1" style="padding-right:6.8px">1:14.05</td><td class="c2 rd"><i class="bar" style="left:-8.5px;width:8.0px"></i>+1.45</td><td class="c3">5</td><td class="c4">11.83</td><td class="c5 rd"><i class="bar" style="left:-1.5px;width:1.0px"></i>+0.20</td><td class="c6">16</td></tr><tr><td class="c1" style="padding-right:6.8px">1:25.30</td><td class="c2 rd"><i class="bar" style="left:-8.5px;width:8.0px"></i>+1.48</td><td class="c3">2</td><td class="c4">11.25</td><td class="c5 rd"><i class="bar" style="left:-1.3px;width:0.8px"></i>+0.03</td><td class="c6">6</td></tr><tr><td class="c1" style="padding-right:6.8px">1:40.81</td><td class="c2 rd"><i class="bar" style="left:-9.5px;width:9.0px"></i>+1.71</td><td class="c3">3</td><td class="c4">15.51</td><td class="c5 rd"><i class="bar" style="left:-1.5px;width:1.0px"></i>+0.23</td><td class="c6">11</td></tr></table></div></div></div>
<i class="cr"></i><i class="cl"></i></div>
</body></html>
